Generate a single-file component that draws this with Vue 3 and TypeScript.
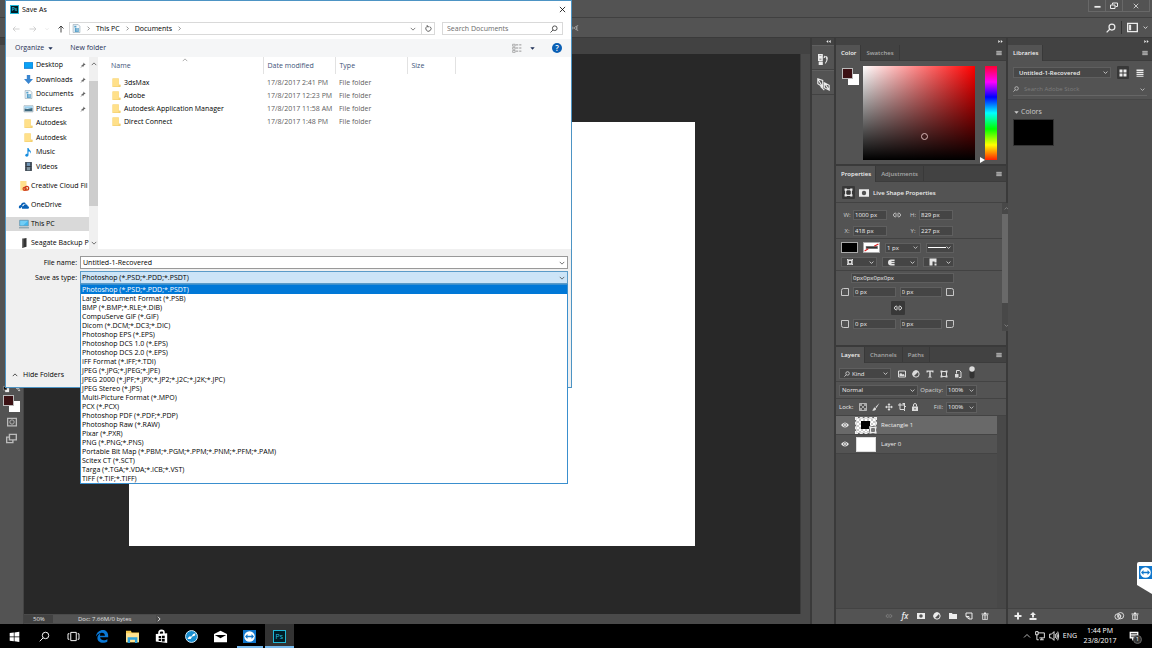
<script setup lang="ts">
import { h, ref } from 'vue'

const icons: Record<string, string> = {
  left: '<path d="M15 8H2M7 3L2 8l5 5" class="s"/>',
  right: '<path d="M1 8h13M9 3l5 5-5 5" class="s"/>',
  up: '<path d="M8 15V2M3 7l5-5 5 5" class="s"/>',
  chevDown: '<path d="M2 5l6 6 6-6" class="s c"/>',
  chevUp: '<path d="M2 11l6-6 6 6" class="s c"/>',
  chevRight: '<path d="M5 2l6 6-6 6" class="s c"/>',
  caret: '<path d="M1 4h14l-7 8z"/>',
  close: '<path d="M2 2l12 12M14 2L2 14" class="s"/>',
  search: '<circle cx="9.5" cy="6.5" r="4.7" class="s"/><path d="M6 10l-5 5" class="s"/>',
  refresh: '<path d="M12 4a6 6 0 1 1-7-1M5 0v4h5" class="s"/>',
  pin: '<path d="M9 1l6 6-2 1-1 0-3 3v3L3 8h3l3-3V3zM6 10l-5 5 1 0 5-4z"/>',
  views: '<path d="M1 2h4v3H1zM1 7h4v3H1zM1 12h4v3H1z" fill="none" stroke="#888"/><path d="M6 3h4M6 8h4M6 13h4M11.500 3H15M11.500 8H15M11.500 13H15" stroke="#777" stroke-width="1.200"/>',
  desktop: '<path d="M0 2h16v12H0z" fill="#1683d8"/><path d="M1 3h14v9H1z" fill="#0aa2f5"/>',
  download: '<path d="M5 0h6v7h5l-8 9-8-9h5z" fill="#3a86d0"/>',
  docs: '<path d="M2 1h9l3 3v11H2z" fill="#f5f9fb" stroke="#7e98a8"/><path d="M4 3h4v3H4zM5 7h7v7H5z" fill="#59a2cc"/><path d="M9 4v9" stroke="#fff"/>',
  pictures: '<path d="M0 3h16v11H0z" fill="#fff" stroke="#8199a8"/><path d="M1 4h14v4H1z" fill="#9bd1ef"/><path d="M1 8l5 1 9-2v6H1z" fill="#3d687e"/>',
  folder: '<path d="M1 1h11v11h3v4H1z" fill="#efcb68"/><path d="M1 1h11v14H3l-2 1z" fill="#ffe08a"/><path d="M12 12h3v3h-3z" fill="#f3d377"/>',
  music: '<path d="M6 0h2c1 4 6 5 4 10 0-3-2-4-4-4v6c0 5-6 4-6 1 0-2 2-3 4-3z" fill="#168de0"/>',
  videos: '<path d="M2 0h12v16H2z" fill="#303943"/><path d="M5 1h6v6H5z" fill="#7196b7"/><path d="M5 9h6v6H5z" fill="#8295a0"/><path d="M3.500 0v16M12.500 0v16" stroke="#a8b2bb" stroke-dasharray="1 2"/>',
  cloudfolder: '<path d="M2 0h10v11h2v4H2z" fill="#ffe08c"/><circle cx="9" cy="12.500" r="2.500" fill="none" stroke="#d6431b" stroke-width="2"/><circle cx="12.500" cy="11.500" r="3" fill="none" stroke="#c8391a" stroke-width="2"/>',
  onedrive: '<path d="M0 13c-1-4 2-5 3-5 1-5 7-5 8-2-4 0-6 2-6 5-2 0-2 1-2 2z" fill="#0961b6"/><path d="M5 14c-2-3 1-5 2-4 1-5 7-4 7 0 2 0 3 2 1 4z" fill="#0961b6"/>',
  pc: '<path d="M1 2h14v9H1z" fill="#42b7ef" stroke="#688da3"/><path d="M2 3h12l-7 7H2z" fill="#72cdf5"/><path d="M0 14h16" stroke="#8aa0ac" stroke-width="2"/>',
  drive: '<path d="M5 1l7-1v14l-7 2z" fill="#333"/><path d="M5 1l2 0v14l-2 1z" fill="#777"/>',
  menu: '<path d="M1 2h14v12H1z" opacity=".6"/><path d="M1 3h14v2H1zM1 7h14v2H1zM1 11h14v2H1z"/>',
  grid: '<path d="M1 1h6v6H1zM9 1h6v6H9zM1 9h6v6H1zM9 9h6v6H9z"/>',
  list: '<path d="M1 1h14v3H1zM1 5.500h14v2.500H1zM1 9.500h14v2.500H1zM1 13.500h14v2H1z"/>',
  ff: '<path d="M1 3l6 5-6 5zM9 3l6 5-6 5z"/>',
  rew: '<path d="M7 3L1 8l6 5zM15 3L9 8l6 5z"/>',
  min: '<path d="M1 9h14v4H1z"/>',
  restore: '<path d="M5 5V2h10v7h-4M1 6h9v7H1z" class="s"/>',
  workspace: '<path d="M1 2h14v12H1z" class="s"/><path d="M3 4h3v8H3z"/>',
  history: '<path d="M1 1h5v3H1zM1 6h5v3H1z" class="s"/><path d="M1 11h6v5H1zM9 2l-1 4 4-1zM10 3c6-1 5 7 1 11l-1-1c3-3 3-7 0-8z"/>',
  brushes: '<path d="M1 1l6 2v8L1 7zM1 1l6 10M9 6l6 3v6l-6-3zM9 6l6 9M4 10l5 5" class="s thin"/>',
  air: '<path d="M0 4l5 4-5 4zM11 4L6 8l5 4zM14 2c-3 3-3 9 0 12" class="s"/>',
  shape: '<path d="M3 3h10v10H3z" class="s"/><path d="M1 1h4v4H1zM11 1h4v4h-4zM1 11h4v4H1zM11 11h4v4h-4z"/>',
  mask: '<path d="M0 2h16v12H0zM8 4.500a3.500 3.500 0 1 0 0 7 3.500 3.500 0 0 0 0-7z" fill-rule="evenodd"/>',
  link: '<path d="M7 5.500a3 3 0 1 0 0 5M9 5.500a3 3 0 1 1 0 5M5 8h6" class="s thin"/>',
  nostroke: '<path d="M3 4.500h20v5H3z" fill="#777"/><path d="M4 6h18v2H4z" fill="#333"/><path d="M1 13l6-4M17 5l7-4" stroke="#d22" stroke-width="2"/>',
  alignS: '<path d="M3 3h10v10H3z" fill="none" stroke="currentColor" stroke-width="4"/><path d="M0 0h3v3H0zM13 0h3v3h-3zM0 13h3v3H0zM13 13h3v3h-3z"/>',
  cap: '<path d="M15 1H7a7 7 0 0 0 0 14h8v-4H8V9h7V7H8V5h7z"/>',
  join: '<path d="M1 1h14v8h-4V7H7v8H1z"/><path d="M11 11h4v4h-4z"/>',
  cornerTL: '<path d="M1 15V5q0-4 4-4h10v14z" class="s"/>',
  cornerTR: '<path d="M1 1h10q4 0 4 4v10H1z" class="s"/>',
  cornerBL: '<path d="M1 1h14v14H5q-4 0-4-4z" class="s"/>',
  cornerBR: '<path d="M1 1h14v10q0 4-4 4H1z" class="s"/>',
  image: '<path d="M1 2h14v12H1z" class="s"/><path d="M3 12V8l3-2 3 3 2-1 2 2v2z"/>',
  adjust: '<circle cx="8" cy="8" r="6.300" class="s"/><path d="M13 3A7 7 0 0 0 3 13z"/>',
  type: '<path d="M1 1h14v4h-2L12 3.500H9.500V13l2 1v1h-7v-1l2-1V3.500H4L3 5H1z"/>',
  smart: '<path d="M5 7V1h6l3 3v11h-4" class="s"/><path d="M2 8h7v7H2z"/>',
  toggle: '<rect x="3" y="1" width="10" height="24" rx="5" fill="#333"/><circle cx="8" cy="6" r="5.500" fill="#ddd"/>',
  checker: '<path d="M1 1h14v14H1z" class="s thin"/><path d="M2 2h4v4H2zM10 2h4v4h-4zM6 6h4v4H6zM2 10h4v4H2zM10 10h4v4h-4z" opacity=".6"/>',
  brush: '<path d="M15 0L7 8l2 2zM6 9c-4 0-2 4-6 6 5 1 9-1 8-4z"/>',
  move: '<path d="M8 0l3 4H9v3h3V5l4 3-4 3V9H9v3h2l-3 4-3-4h2V9H4v2L0 8l4-3v2h3V4H5z"/>',
  crop: '<path d="M4 0v4H0M4 4h9v9H4zM13 13v3M13 9l3-3" class="s"/><path d="M8 0h6v6z"/>',
  lock: '<path d="M2 7h12v9H2z"/><path d="M5 7V4q0-3 3-3t3 3v3" class="s"/><path d="M7 10h2v3H7z" fill="#444"/>',
  eye: '<path d="M0 8q8-10 16 0-8 10-16 0zM8 4.500a3.500 3.500 0 1 0 0 7 3.500 3.500 0 0 0 0-7z" fill-rule="evenodd"/><circle cx="8" cy="8" r="2"/>',
  group: '<path d="M0 2h6l1 2h9v10H0z"/>',
  newLayer: '<path d="M2 2h12v12H8L2 9zM2 9h6v5" class="s"/>',
  trash: '<path d="M1 3h14v2H1zM6 1h4v2H6z"/><path d="M3 6h10v9H3zM6.500 6v9M9.500 6v9" class="s thin"/>',
  plus: '<path d="M6 1h4v5h5v4h-5v5H6v-5H1V6h5z"/>',
  upload: '<path d="M8 0l6 6h-4v5H6V6H2zM1 12h14v4H1z"/>',
  cc: '<circle cx="6" cy="9" r="4.500" class="s thin"/><circle cx="10.500" cy="7.500" r="5" class="s thin"/><circle cx="9" cy="8" r="2" class="s thin"/>',
  quick: '<path d="M1 2h14v12H1z" class="s"/><circle cx="8" cy="8" r="3.500" class="s thin"/>',
  screen: '<path d="M5 2h10v8H5z" class="s"/><path d="M5 6H1v8h9v-4" class="s"/>',
  defaults: '<path d="M5 5h9v9H5z" fill="#eee"/><path d="M1 1h8v8H1z" fill="#111" stroke="#ddd"/>',
  swap: '<path d="M2 5h8v8M5 2L2 5l3 3M7 10l3 3 3-3" class="s"/>',
  win: '<path d="M1 3l6-1v6H1zM8 2l7-1v7H8zM1 9h6v6l-6-1zM8 9h7v7l-7-1z"/>',
  taskview: '<path d="M4 2h8v12H4zM2 4H0v8h2M14 4h2v8h-2" class="s"/>',
  edge: '<path d="M0 8C1-2 15-3 15 7v2H5c1 5 7 4 9 2v3C9 18 0 15 2 8c1-3 4-4 4-4-1 1-1 2-1 3h6C11 2 4 2 0 8z" fill="#0a78d6"/>',
  explorer: '<path d="M0 1h6l1 2h9v12H0z" fill="#f5c94f"/><path d="M0 4h16v11H0z" fill="#ffe391"/><path d="M2 9h12v7h-3v-4H5v4H2z" fill="#2fa4dd"/>',
  store: '<path d="M1 5l14-1v12L1 14z"/><path d="M5 5V3q0-2 3-2.500 3 0 3 2.500v2" class="s"/><path d="M4.500 7.500h3v2.500h-3zM8.500 7H12v3H8.500zM4.500 11h3v2.500h-3zM8.500 11H12v3H8.500z" fill="#000"/>',
  safari: '<circle cx="8" cy="8" r="7.300" fill="#188ed0" stroke="#d8edf8" stroke-width="1.200"/><path d="M3 11l2-3 3 0 2-3 3-1-1 3-3 1-2 3z" fill="#fff"/>',
  mail: '<path d="M0 5l8-4 8 4v10H0z"/><path d="M1 6h14l-7 4z" fill="#000"/>',
  tv: '<path d="M0 0h16v16H0z" fill="#1177cc"/><circle cx="8" cy="8" r="6.500" fill="#fff"/><path d="M2.500 8l3-3v2h5V5l3 3-3 3V9h-5v2z" fill="#1177cc"/>',
  net: '<path d="M5 3h10v8H7M8 14h6M11 11v3M1 1h4v5H1zM3 6v8h3" class="s"/>',
  vol: '<path d="M1 5h3l4-4v14l-4-4H1zM10 5q2 3 0 6M12 3q3 5 0 10M14 1q3 7 0 14" class="s"/>',
  note: '<path d="M1 1h14v11H8l-3 4v-4H1z"/><path d="M3 4h10M3 6.500h10M3 9h7" stroke="#000"/>',
}

const Icon = (props: { name: string }) =>
  h('svg', { viewBox: props.name === 'nostroke' ? '0 0 25 14' : '0 0 16 16', 'aria-hidden': 'true', innerHTML: icons[props.name] })
Icon.props = ['name']

const quick = [
  { icon: 'desktop', label: 'Desktop', pinned: true },
  { icon: 'download', label: 'Downloads', pinned: true },
  { icon: 'docs', label: 'Documents', pinned: true },
  { icon: 'pictures', label: 'Pictures', pinned: true },
  { icon: 'folder', label: 'Autodesk', pinned: false },
  { icon: 'folder', label: 'Autodesk', pinned: false },
  { icon: 'music', label: 'Music', pinned: false },
  { icon: 'videos', label: 'Videos', pinned: false },
]
const roots = [
  { icon: 'cloudfolder', label: 'Creative Cloud Fil' },
  { icon: 'onedrive', label: 'OneDrive' },
  { icon: 'pc', label: 'This PC' },
  { icon: 'drive', label: 'Seagate Backup P' },
]
const files = [
  ['3dsMax', '17/8/2017 2:41 PM'],
  ['Adobe', '17/8/2017 12:23 PM'],
  ['Autodesk Application Manager', '17/8/2017 11:58 AM'],
  ['Direct Connect', '17/8/2017 1:48 PM'],
]
const formats = [
  'Photoshop (*.PSD;*.PDD;*.PSDT)', 'Large Document Format (*.PSB)', 'BMP (*.BMP;*.RLE;*.DIB)',
  'CompuServe GIF (*.GIF)', 'Dicom (*.DCM;*.DC3;*.DIC)', 'Photoshop EPS (*.EPS)',
  'Photoshop DCS 1.0 (*.EPS)', 'Photoshop DCS 2.0 (*.EPS)', 'IFF Format (*.IFF;*.TDI)',
  'JPEG (*.JPG;*.JPEG;*.JPE)', 'JPEG 2000 (*.JPF;*.JPX;*.JP2;*.J2C;*.J2K;*.JPC)', 'JPEG Stereo (*.JPS)',
  'Multi-Picture Format (*.MPO)', 'PCX (*.PCX)', 'Photoshop PDF (*.PDF;*.PDP)', 'Photoshop Raw (*.RAW)',
  'Pixar (*.PXR)', 'PNG (*.PNG;*.PNS)', 'Portable Bit Map (*.PBM;*.PGM;*.PPM;*.PNM;*.PFM;*.PAM)',
  'Scitex CT (*.SCT)', 'Targa (*.TGA;*.VDA;*.ICB;*.VST)', 'TIFF (*.TIF;*.TIFF)',
]
const format = ref(formats[0])
const fileName = ref('Untitled-1-Recovered')
const filters = ['image', 'adjust', 'type', 'shape', 'smart']
const locks = ['checker', 'brush', 'move', 'crop', 'lock']
const layerTools = ['link', 'fx', 'mask', 'adjust', 'group', 'newLayer', 'trash']
const apps = ['win', 'search', 'taskview', 'edge', 'explorer', 'store', 'safari', 'mail', 'tv', 'ps']
</script>

<template>
  <div class="screen">
    <div class="ps">
      <header class="titlebar">
        <button class="wb" aria-label="Minimize"><Icon name="min" class="i7" /></button>
        <button class="wb" aria-label="Restore"><Icon name="restore" class="i8" /></button>
        <button class="wb wide" aria-label="Close"><Icon name="close" class="i6" /></button>
      </header>
      <div class="options">
        <span class="air"><Icon name="air" class="i8" /></span>
        <button aria-label="Search"><Icon name="search" class="i10" /></button>
        <i class="vline"></i>
        <button class="ws" aria-label="Workspace"><Icon name="workspace" class="i11" /><Icon name="chevDown" class="i5" /></button>
      </div>
      <div class="main">
        <div class="work">
          <aside class="tools">
            <div class="strip"></div>
            <div class="toolset">
              <div class="mini"><Icon name="defaults" class="i7" /><Icon name="swap" class="i5" /></div>
              <div class="fgbg"><i></i><b></b></div>
              <button aria-label="Quick mask"><Icon name="quick" class="i10" /></button>
              <button aria-label="Screen mode"><Icon name="screen" class="i11" /></button>
            </div>
          </aside>
          <section class="doc">
            <div class="doctabs"></div>
            <div class="canvasrow">
              <div class="canvas"><div class="paper"></div></div>
              <div class="vscroll"></div>
            </div>
            <footer class="status">
              <span class="zoomv">50%</span><span class="docinfo">Doc: 7.66M/0 bytes</span><Icon name="chevRight" class="i6" />
            </footer>
          </section>
        </div>

        <aside class="dock">
          <div class="strip"><Icon name="rew" class="i5" /></div>
          <button class="dk" aria-label="History"><Icon name="history" class="i11" /></button>
          <button class="dk" aria-label="Brushes"><Icon name="brushes" class="i13" /></button>
          <div class="fill"></div>
        </aside>

        <aside class="panels">
          <div class="strip"><Icon name="ff" class="i5" /></div>
          <section class="panel color">
            <nav class="tabs"><button class="on">Color</button><button>Swatches</button><Icon name="menu" class="i6 mn" /></nav>
            <div class="picker">
              <div class="fgbg small"><i></i><b></b></div>
              <div class="field"><span class="ring"></span></div>
              <div class="hue"><span class="knob"></span></div>
            </div>
          </section>

          <section class="panel props">
            <nav class="tabs"><button class="on">Properties</button><button>Adjustments</button><Icon name="menu" class="i6 mn" /></nav>
            <div class="ptitle">
              <span class="box"><Icon name="shape" class="i9" /></span><Icon name="mask" class="i10" /><strong>Live Shape Properties</strong>
            </div>
            <div class="pbody">
              <div class="pform">
                <div class="block wh">
                  <label for="pw">W:</label><input id="pw" value="1000 px" />
                  <Icon name="link" class="i10" />
                  <label for="ph">H:</label><input id="ph" value="829 px" />
                  <label for="px">X:</label><input id="px" value="418 px" />
                  <span></span>
                  <label for="py">Y:</label><input id="py" value="227 px" />
                </div>
                <div class="block">
                  <div class="prow">
                    <button class="sw black" aria-label="Fill"></button>
                    <button class="sw none" aria-label="Stroke"><Icon name="nostroke" class="ns" /></button>
                    <span class="combo w36"><input value="1 px" aria-label="Stroke width" /><Icon name="chevDown" class="i5" /></span>
                    <button class="combo grow" aria-label="Stroke style"><i class="ln"></i><Icon name="chevDown" class="i5" /></button>
                  </div>
                  <div class="prow r2">
                    <button class="combo w36" aria-label="Align"><Icon name="alignS" class="i6" /><Icon name="chevDown" class="i5" /></button>
                    <button class="combo w36" aria-label="Caps"><Icon name="cap" class="i7" /><Icon name="chevDown" class="i5" /></button>
                    <button class="combo grow" aria-label="Corners"><Icon name="join" class="i8" /><Icon name="chevDown" class="i5" /></button>
                  </div>
                </div>
                <div class="block radius">
                  <input class="all" value="0px0px0px0px" aria-label="Corner radii" />
                  <div class="corners"><Icon name="cornerTL" class="i8" /><input value="0 px" aria-label="Top left" /><input value="0 px" aria-label="Top right" /><Icon name="cornerTR" class="i8" /></div>
                  <button class="box lk" aria-label="Link radii"><Icon name="link" class="i10" /></button>
                  <div class="corners"><Icon name="cornerBL" class="i8" /><input value="0 px" aria-label="Bottom left" /><input value="0 px" aria-label="Bottom right" /><Icon name="cornerBR" class="i8" /></div>
                </div>
              </div>
              <div class="sb"><Icon name="chevUp" class="i5" /><i></i><Icon name="chevDown" class="i5" /></div>
            </div>
          </section>

          <section class="panel layers">
            <nav class="tabs"><button class="on">Layers</button><button>Channels</button><button>Paths</button><Icon name="menu" class="i6 mn" /></nav>
            <div class="lrow first">
              <span class="sel kind"><Icon name="search" class="i6" /><select aria-label="Filter"><option>Kind</option></select><Icon name="chevDown" class="i5" /></span>
              <span class="icons"><Icon v-for="f in filters" :key="f" :name="f" class="i8" /><Icon name="toggle" class="i8 tg" /></span>
            </div>
            <div class="lrow">
              <span class="sel blend"><select aria-label="Blend mode"><option>Normal</option></select><Icon name="chevDown" class="i5" /></span>
              <label class="pc" for="op">Opacity:</label><span class="combo w30"><input id="op" value="100%" /><Icon name="chevDown" class="i5" /></span>
            </div>
            <div class="lrow">
              <span class="lb">Lock:</span>
              <span class="icons lk5"><Icon v-for="f in locks" :key="f" :name="f" class="i8" /></span>
              <label class="pc" for="fl">Fill:</label><span class="combo w30"><input id="fl" value="100%" /><Icon name="chevDown" class="i5" /></span>
            </div>
            <ul class="llist">
              <li class="on"><Icon name="eye" class="i8" /><span class="th rect"><i></i><Icon name="shape" class="i8" /></span>Rectangle 1</li>
              <li><Icon name="eye" class="i8" /><span class="th"></span>Layer 0</li>
            </ul>
            <footer class="lfoot">
              <button v-for="t in layerTools" :key="t" :aria-label="t" :class="{ dim: t === 'link' }"><em v-if="t === 'fx'">fx</em><Icon v-else :name="t" class="i8" /></button>
            </footer>
          </section>
        </aside>

        <aside class="libs">
          <div class="strip"><Icon name="ff" class="i5" /></div>
          <nav class="tabs"><button class="on">Libraries</button><Icon name="menu" class="i6 mn" /></nav>
          <div class="lhead">
            <div class="lsel">
              <span class="sel"><select aria-label="Library"><option>Untitled-1-Recovered</option></select><Icon name="chevDown" class="i5" /></span>
              <button class="box" aria-label="Grid"><Icon name="grid" class="i8" /></button>
              <button aria-label="List"><Icon name="list" class="i8" /></button>
            </div>
            <div class="lsearch"><Icon name="search" class="i6" /><input type="search" placeholder="Search Adobe Stock" aria-label="Search Adobe Stock" /><Icon name="chevDown" class="i5" /></div>
          </div>
          <div class="lbody">
            <h3><Icon name="caret" class="i5" />Colors</h3>
            <div class="chip"></div>
          </div>
          <footer class="libfoot">
            <button aria-label="Add"><Icon name="plus" class="i8" /></button><button aria-label="Upload"><Icon name="upload" class="i8" /></button>
            <span class="grow"></span>
            <button aria-label="Creative Cloud"><Icon name="cc" class="i10" /></button><button aria-label="Delete"><Icon name="trash" class="i8" /></button>
          </footer>
        </aside>
      </div>
    </div>

    <nav class="taskbar">
      <div class="apps">
        <button v-for="a in apps" :key="a" :class="a" :aria-label="a"><span v-if="a === 'ps'" class="pslogo">Ps</span><Icon v-else :name="a" class="i13" /></button>
      </div>
      <div class="tray">
        <Icon name="chevUp" class="i8" /><Icon name="net" class="i10" /><Icon name="vol" class="i10" />
        <span class="lang">ENG</span>
        <time class="clock">1:44 PM<br />23/8/2017</time>
        <span class="notif"><Icon name="note" class="i10" /><b>1</b></span>
      </div>
    </nav>

    <div class="tvtab"><Icon name="tv" class="i13" /></div>

    <section class="dialog" role="dialog" aria-label="Save As">
      <header class="dtitle"><span class="pslogo">Ps</span>Save As<button aria-label="Close"><Icon name="close" class="i7" /></button></header>
      <div class="dnav">
        <button class="dim" aria-label="Back"><Icon name="left" class="i8" /></button>
        <button class="dim" aria-label="Forward"><Icon name="right" class="i8" /></button>
        <button class="dim" aria-label="Recent"><Icon name="chevDown" class="i4" /></button>
        <button aria-label="Up"><Icon name="up" class="i8" /></button>
        <div class="addr">
          <Icon name="docs" class="i9" /><Icon name="chevRight" class="i5" /><a href="#">This PC</a><Icon name="chevRight" class="i5" /><a href="#">Documents</a><Icon name="chevRight" class="i5" />
          <span class="grow"></span><Icon name="chevDown" class="i6" /><button aria-label="Refresh"><Icon name="refresh" class="i7" /></button>
        </div>
        <div class="find"><input type="search" placeholder="Search Documents" aria-label="Search Documents" /><Icon name="search" class="i8" /></div>
      </div>
      <div class="dbar">
        <button>Organize <Icon name="caret" class="i5" /></button>
        <button class="nf">New folder</button>
        <span class="grow"></span>
        <button aria-label="Views"><Icon name="views" class="i10" /><Icon name="caret" class="i5 vc" /></button>
        <button class="help" aria-label="Help">?</button>
      </div>
      <div class="dbody">
        <nav class="tree">
          <div class="items">
            <ul class="q"><li v-for="(n, k) in quick" :key="k"><Icon :name="n.icon" class="i9" /><span>{{ n.label }}</span><Icon v-if="n.pinned" name="pin" class="i6 pin" /></li></ul>
            <ul class="r"><li v-for="n in roots" :key="n.label" :class="{ sel2: n.label === 'This PC' }"><Icon :name="n.icon" class="i10" /><span>{{ n.label }}</span></li></ul>
          </div>
          <div class="tsb"><Icon name="chevUp" class="i6" /><i></i><Icon name="chevDown" class="i6" /></div>
        </nav>
        <div class="files">
          <table>
            <colgroup><col class="c1" /><col class="c2" /><col class="c2" /><col class="c3" /><col /></colgroup>
            <thead><tr><th>Name<Icon name="chevUp" class="i6 sort" /></th><th>Date modified</th><th>Type</th><th>Size</th><th></th></tr></thead>
            <tbody>
              <tr v-for="f in files" :key="f[0]"><td><span class="fn"><Icon name="folder" class="i9" />{{ f[0] }}</span></td><td>{{ f[1] }}</td><td>File folder</td><td></td><td></td></tr>
            </tbody>
          </table>
        </div>
      </div>
      <div class="dfoot">
        <div class="frow"><label for="fn">File name:</label><div class="fbox"><input id="fn" v-model="fileName" /><Icon name="chevDown" class="i6" /></div></div>
        <div class="frow">
          <label for="ft">Save as type:</label>
          <div class="fbox open">
            <select id="ft" v-model="format"><option v-for="f in formats" :key="f">{{ f }}</option></select><Icon name="chevDown" class="i6" />
            <ul class="drop" role="listbox" aria-label="Formats"><li v-for="f in formats" :key="f" role="option" :aria-selected="f === format" :class="{ cur: f === format }" @click="format = f">{{ f }}</li></ul>
          </div>
        </div>
        <button class="hide"><Icon name="chevUp" class="i6" />Hide Folders</button>
      </div>
    </section>
  </div>
</template>

<style>
html, body { height: 100%; overflow: hidden; background: #000; }
</style>

<style scoped>
* { box-sizing: border-box; }
.screen { position: relative; display: flex; flex-direction: column; height: 100vh; overflow: hidden; font: 6px/8px "Open Sans", "Noto Sans", sans-serif; color: #ececec; }
button, input, select { font: inherit; color: inherit; background: none; border: 0; padding: 0; margin: 0; outline: 0; appearance: none; min-width: 0; }
input[type="search"]::-webkit-search-cancel-button { display: none; }
button { display: flex; align-items: center; justify-content: center; }
ul { list-style: none; margin: 0; padding: 0; }
svg { display: block; flex: none; fill: currentColor; overflow: visible; }
svg :deep(.s) { fill: none; stroke: currentColor; stroke-width: 2; }
svg :deep(.thin) { stroke-width: 1.4; }
svg :deep(.c) { stroke-width: 2.6; }
.i4 { width: 4px; height: 4px; } .i5 { width: 5px; height: 5px; } .i6 { width: 6px; height: 6px; }
.i7 { width: 7px; height: 7px; } .i8 { width: 8px; height: 8px; } .i9 { width: 9px; height: 9px; }
.i10 { width: 10px; height: 10px; } .i11 { width: 11px; height: 11px; } .i13 { width: 13px; height: 13px; }
.grow { flex: 1; }

.ps { flex: 1; min-height: 0; display: flex; flex-direction: column; background: #535353; }
.titlebar { height: 18px; flex: none; display: flex; justify-content: flex-end; padding-right: 2px; border-bottom: 1px solid #404040; }
.wb { width: 17px; height: 12px; border: 1px solid #686868; border-width: 0 0 1px 1px; }
.wb.wide { width: 28px; border-right-width: 1px; }
.options { height: 19px; flex: none; display: flex; align-items: center; justify-content: flex-end; gap: 5px; padding-right: 4px; }
.air { flex: 1; padding-left: 571px; color: #999; }
.vline { width: 1px; height: 13px; background: #333; }
.ws { gap: 5px; }
.main { flex: 1; min-height: 0; display: grid; grid-template-columns: minmax(0, 1fr) 22px 170px 144px; gap: 2px; background: #3a3a3a; border-top: 1px solid #3a3a3a; }
.strip { height: 7px; flex: none; background: #424242; display: flex; align-items: center; justify-content: flex-end; padding-right: 3px; }
.work { display: flex; min-height: 0; }
.tools { width: 24px; background: #535353; border-right: 1px solid #444; display: flex; flex-direction: column; }
.toolset { display: flex; flex-direction: column; margin-top: 341px; padding-left: 3px; }
.mini { display: flex; gap: 6px; align-items: center; }
.fgbg { position: relative; width: 18px; height: 18px; margin-top: 2px; }
.fgbg i, .fgbg b { position: absolute; width: 11px; height: 11px; }
.fgbg i { right: 1px; bottom: 1px; background: #fff; }
.fgbg b { left: 0; top: 0; background: #3c1114; border: 1px solid #bbb; }
.tools button { height: 17px; width: 17px; color: #bbb; }
.doc { flex: 1; min-width: 0; display: flex; flex-direction: column; }
.doctabs { height: 16px; background: #424242; }
.canvasrow { flex: 1; min-height: 0; display: flex; background: #282828; }
.canvas { flex: 1; display: flex; align-items: center; justify-content: center; }
.paper { width: 73%; aspect-ratio: 4 / 3; background: #fff; }
.vscroll { width: 10px; background: #4a4a4a; border-left: 1px solid #3c3c3c; }
.status { height: 10px; display: flex; align-items: center; background: #4a4a4a; color: #e0e0e0; }
.zoomv { width: 29px; padding-left: 9px; background: #424242; }
.docinfo { width: 103px; padding-left: 25px; background: #535353; }

.dock { display: flex; flex-direction: column; background: #424242; }
.dk { height: 24px; background: #535353; margin-bottom: 1px; border-top: 1px solid #5f5f5f; padding-top: 3px; }
.dock .fill { flex: 1; background: #535353; }
.panels { display: flex; flex-direction: column; min-height: 0; }
.panel { background: #535353; display: flex; flex-direction: column; margin-bottom: 2px; }
.tabs { display: flex; height: 16px; flex: none; background: #424242; align-items: stretch; border-bottom: 1px solid #3c3c3c; }
.tabs button { padding: 0 5px; color: #a8a8a8; font-weight: 600; border-right: 1px solid #393939; }
.tabs .on { background: #535353; color: #f2f2f2; margin-bottom: -1px; padding-right: 4px; }
.mn { margin: 5px 4px 0 auto; color: #b0b0b0; }
.picker { display: flex; height: 103px; padding: 5px 9px 4px 6px; }
.picker .fgbg { margin: 2px 3px 0 0; }
.field { position: relative; flex: 1; background: linear-gradient(to top, #000, transparent), linear-gradient(to right, #fff, #f00); }
.ring { position: absolute; left: 52%; top: 71%; width: 7px; height: 7px; border: 1px solid #d8b8b8; border-radius: 50%; }
.hue { position: relative; width: 12px; margin-left: 10px; background: linear-gradient(#f03, #f0f 17%, #00f 33%, #0ff 50%, #0f0 67%, #ff0 84%, #f20); }
.knob { position: absolute; left: -5px; bottom: -3px; border: 3px solid transparent; border-left: 5px solid #fff; border-right: 0; }
.box { background: #383838; border-radius: 1px; display: flex; align-items: center; justify-content: center; }
.ptitle { height: 21px; display: flex; align-items: center; gap: 4px; padding: 1px 0 0 6px; border-bottom: 1px solid #424242; }
.ptitle .box { width: 13px; height: 13px; }
.ptitle strong { font-weight: 600; }
.pbody { display: flex; height: 128px; }
.pform { flex: 1; }
.pform input, .combo, .sel { background: #454545; border: 1px solid #5f5f5f; height: 10px; }
.pform input { width: 100%; padding-left: 1px; color: #f2f2f2; }
.block { padding: 3px 48px 3px 5px; border-bottom: 1px solid #424242; }
.block:last-child { border: 0; }
.wh { display: grid; grid-template-columns: 12px 34px 20px 12px 34px; row-gap: 6px; padding: 7px 48px 2px 5px; align-items: center; justify-items: center; color: #ccc; }
.prow { display: flex; gap: 5px; align-items: center; }
.r2 { margin-top: 4px; }
.sw { width: 17px; height: 11px; border: 1px solid #aaa; }
.sw.black { background: #000; }
.sw.none { background: #fff; }
.ns { width: 15px; height: 9px; }
.combo { display: flex; align-items: center; justify-content: space-between; padding: 0 2px 0 0; color: #d0d0d0; }
button.combo { padding-left: 5px; color: #e4e4e4; }
.combo input { flex: 1; width: auto; height: 8px; border: 0; background: none; padding-left: 1px; color: #f2f2f2; }
.w36 { width: 36px; flex: none; } .w30 { width: 31px; }
.ln { width: 18px; height: 1px; background: #fff; }
button.grow .ln { margin-left: -4px; }
.radius { padding-top: 2px; }
.pform .all { margin-left: 10px; width: calc(100% - 10px); }
.corners { display: grid; grid-template-columns: 8px 1fr 1fr 8px; gap: 4px; align-items: center; margin-top: 4px; color: #c8c8c8; }
.lk { width: 14px; height: 14px; margin: 4px auto 0; }
.sb { width: 9px; background: #484848; display: flex; flex-direction: column; align-items: center; padding: 3px 0; color: #888; }
.sb i { width: 8px; height: 89px; background: #696969; margin: 3px 0 auto; }
.props { padding-bottom: 14px; }
.layers { flex: 1; margin: 0; background: #4b4b4b; }
.lrow { height: 17px; display: flex; align-items: center; padding-left: 3px; background: #535353; border-bottom: 1px solid #434343; }
.first { height: 19px; padding-top: 3px; }
.sel { display: flex; align-items: center; padding-right: 2px; }
.sel select { flex: 1; padding-left: 2px; }
.sel svg { color: #ddd; }
.kind { width: 52px; height: 11px; padding-left: 4px; }
.blend { width: 79px; height: 11px; }
.icons { display: flex; gap: 6px; margin-left: 7px; color: #dcdcdc; }
.tg { margin-top: -4px; }
.lk5 { gap: 5px; margin-left: 4px; }
.lb { width: 16px; }
.pc { margin-left: auto; padding-right: 3px; color: #d8d8d8; }
.lrow .w30 { margin-right: 29px; height: 11px; }
.llist { flex: 1; border-right: 9px solid #484848; }
.llist li { height: 19px; display: flex; align-items: center; padding-left: 5px; border-bottom: 1px solid #444; background: #535353; }
.llist li.on { background: #696969; }
.th { position: relative; width: 20px; height: 15px; margin: 0 5px 0 7px; background: #fff; border: 1px solid #ddd; }
.rect { background: repeating-conic-gradient(#ccc 0 25%, #fff 0 50%) 0 0 / 4px 4px; outline: 1px dashed #eee; }
.rect i { position: absolute; left: 4px; top: 2px; width: 9px; height: 8px; background: #000; }
.rect svg { position: absolute; right: -2px; bottom: -2px; background: #777; }
.lfoot { height: 16px; display: flex; justify-content: flex-end; align-items: center; gap: 8px; padding: 0 17px 1px 0; background: #535353; border-top: 1px solid #434343; }
.lfoot em { font-size: 8px; width: 8px; font-weight: 600; }
.lfoot .dim { color: #888; }
.libs { display: flex; flex-direction: column; background: #4d4d4d; min-height: 0; }
.lhead { background: #535353; height: 38px; padding: 5px 5px 0; }
.lsel { display: flex; align-items: center; gap: 6px; padding-right: 3px; }
.lsel .sel { flex: 1; height: 11px; font-weight: 600; padding-left: 3px; background: #484848; }
.lsel button { width: 12px; height: 13px; }
.lsel button + button { width: 9px; }
.lsearch { display: flex; align-items: center; height: 13px; margin-top: 4px; border-bottom: 1px solid #666; color: #ccc; padding-right: 2px; }
.lsearch input { flex: 1; padding-left: 5px; font-size: 6px; }
.lsearch input::placeholder { color: #7d7d7d; }
.lbody { flex: 1; padding: 8px 5px; border-top: 1px solid #464646; }
h3 { margin: 0 0 3px; padding-left: 1px; font: 7px/8px "Open Sans", sans-serif; display: flex; align-items: center; gap: 2px; color: #ccc; }
.chip { width: 41px; height: 27px; background: #000; border: 1px solid #333; }
.libfoot { height: 16px; display: flex; align-items: center; gap: 7px; padding: 0 13px 1px 6px; background: #535353; border-top: 1px solid #434343; }

.taskbar { height: 24px; flex: none; background: #000; display: flex; justify-content: space-between; color: #fff; }
.apps { display: grid; grid-template-columns: repeat(10, 1fr); width: 294px; }
.apps .search svg, .apps .win svg, .apps .taskview svg { width: 11px; height: 11px; }
.apps .search :deep(.s), .apps .taskview :deep(.s), .tray :deep(.s) { stroke-width: 1.4; }
.apps .tv, .apps .ps { border-bottom: 2px solid #76b9ed; padding-top: 2px; display: flex; flex-direction: row; }
.apps .tv { background: #000; margin: 0 2px; }
.apps .ps { background: #333; }
.pslogo { width: 13px; height: 13px; background: #001d26; border: 1px solid #21b8d8; color: #2bc3e2; font: 7px/11px "Open Sans", sans-serif; text-align: center; }
.tray { display: flex; align-items: center; gap: 4px; font-size: 7px; line-height: 10px; padding-right: 13px; }
.clock { text-align: center; width: 38px; }
.notif { position: relative; margin-left: 6px; }
.notif b { position: absolute; left: 4px; top: 4px; width: 9px; height: 9px; border-radius: 50%; background: #333; border: 1px solid #666; font: 6px/7px "Open Sans", sans-serif; text-align: center; }
.tvtab { position: absolute; right: 0; top: 562px; width: 15px; height: 32px; padding: 4px 0 0 2px; background: #fff; border-radius: 2px 0 0 0; clip-path: polygon(0 0, 100% 0, 100% 100%, 0 72%); }

.dialog { position: absolute; left: 5px; top: 0; width: 567px; background: #fff; border: 1px solid #4d94c4; color: #000; font-size: 7px; line-height: 10px; }
.dialog :deep(.s) { stroke-width: 1.8; }
.dtitle { display: flex; align-items: center; height: 17px; padding: 0 5px 0 4px; }
.dtitle .pslogo { width: 9px; height: 9px; font-size: 5px; line-height: 7px; margin-right: 3px; font-weight: 600; }
.dtitle button { margin-left: auto; }
.dnav { display: flex; align-items: center; height: 21px; padding: 0 8px 0 6px; gap: 9px; }
.dnav > button { color: #333; }
.dnav > .dim { color: #ccc; }
.dnav > .dim + .dim + .dim { margin: 0 -1px; }
.addr { flex: 1; display: flex; align-items: center; height: 13px; border: 1px solid #d9d9d9; padding-left: 2px; gap: 5px; color: #444; margin-left: -5px; }
.addr a { color: #000; text-decoration: none; }
.addr button { width: 13px; height: 11px; border-left: 1px solid #d9d9d9; }
.find { width: 121px; height: 13px; border: 1px solid #d9d9d9; display: flex; align-items: center; padding: 0 4px; margin-left: -2px; color: #444; }
.find input { flex: 1; }
.find input::placeholder { color: #6a6a6a; }
.dbar { height: 18px; background: #f5f6f7; display: flex; align-items: center; padding: 0 9px 0 9px; color: #1e2f56; }
.dbar button { gap: 4px; }
.nf { margin-left: 17px; }
.vc { margin-left: 4px; }
.dbar .help { width: 10px; height: 10px; border-radius: 50%; background: #0a5fb4; color: #fff; margin-left: 17px; font-weight: 600; font-size: 8px; line-height: 10px; }
.dbody { display: flex; height: 192px; }
.tree { width: 92px; display: flex; }
.items { flex: 1; min-width: 0; overflow: hidden; white-space: nowrap; padding-top: 1px; }
.q { display: grid; grid-auto-rows: 1fr; height: 116px; padding-left: 18px; }
.tree li { display: flex; align-items: center; gap: 3px; }
.pin { margin: 0 3px 0 auto; color: #666; }
.r { display: grid; gap: 5px; padding-top: 5px; }
.r li { height: 14px; padding-left: 13px; }
.tree .r li { gap: 2px; }
.tree .sel2 { background: #d9d9d9; }
.tsb { width: 9px; background: #f0f0f0; display: flex; flex-direction: column; align-items: center; padding: 4px 0 3px; color: #333; }
.tsb i { width: 9px; height: 125px; background: #cdcdcd; margin: 14px 0 auto; }
.files { flex: 1; padding-left: 9px; }
table { table-layout: fixed; width: 100%; border-collapse: collapse; }
.c1 { width: 156px; } .c2 { width: 72px; } .c3 { width: 48px; }
th { position: relative; height: 17px; text-align: left; font-weight: 400; color: #3c5278; padding: 0 0 0 4px; border-right: 1px solid #e2e2e2; }
th:last-child { border: 0; }
th:first-child, td:first-child { padding-left: 4px; }
.sort { position: absolute; left: 75px; top: 0; color: #888; }
td { height: 13px; padding: 0 0 0 4px; color: #606060; white-space: nowrap; }
tbody::before { content: ""; display: block; height: 2px; }
.fn { display: flex; align-items: center; gap: 3px; color: #000; padding-left: 1px; }
.dfoot { background: #f0f0f0; padding: 7px 3px 7px 0; height: 138px; display: flex; flex-direction: column; }
.frow { display: grid; grid-template-columns: 74px 1fr; height: 13px; align-items: center; margin-bottom: 2px; }
.frow label { text-align: right; padding-right: 3px; }
.fbox { position: relative; height: 13px; display: flex; align-items: center; background: #fff; border: 1px solid #999; padding-right: 2px; color: #333; }
.fbox input, .fbox select { flex: 1; padding-left: 2px; color: #000; height: 11px; }
.open { background: #cce4f7; border-color: #5b9bc8; }
.open select { padding-left: 1px; }
.drop { position: absolute; z-index: 2; left: -1px; right: -1px; top: 12px; background: #fff; border: 1px solid #3a8fce; line-height: 9px; color: #000; }
.drop li { height: 9px; padding-left: 1px; }
.drop .cur { background: #0078d7; color: #fff; }
.hide { margin: auto auto 0 6px; gap: 5px; }
</style>
